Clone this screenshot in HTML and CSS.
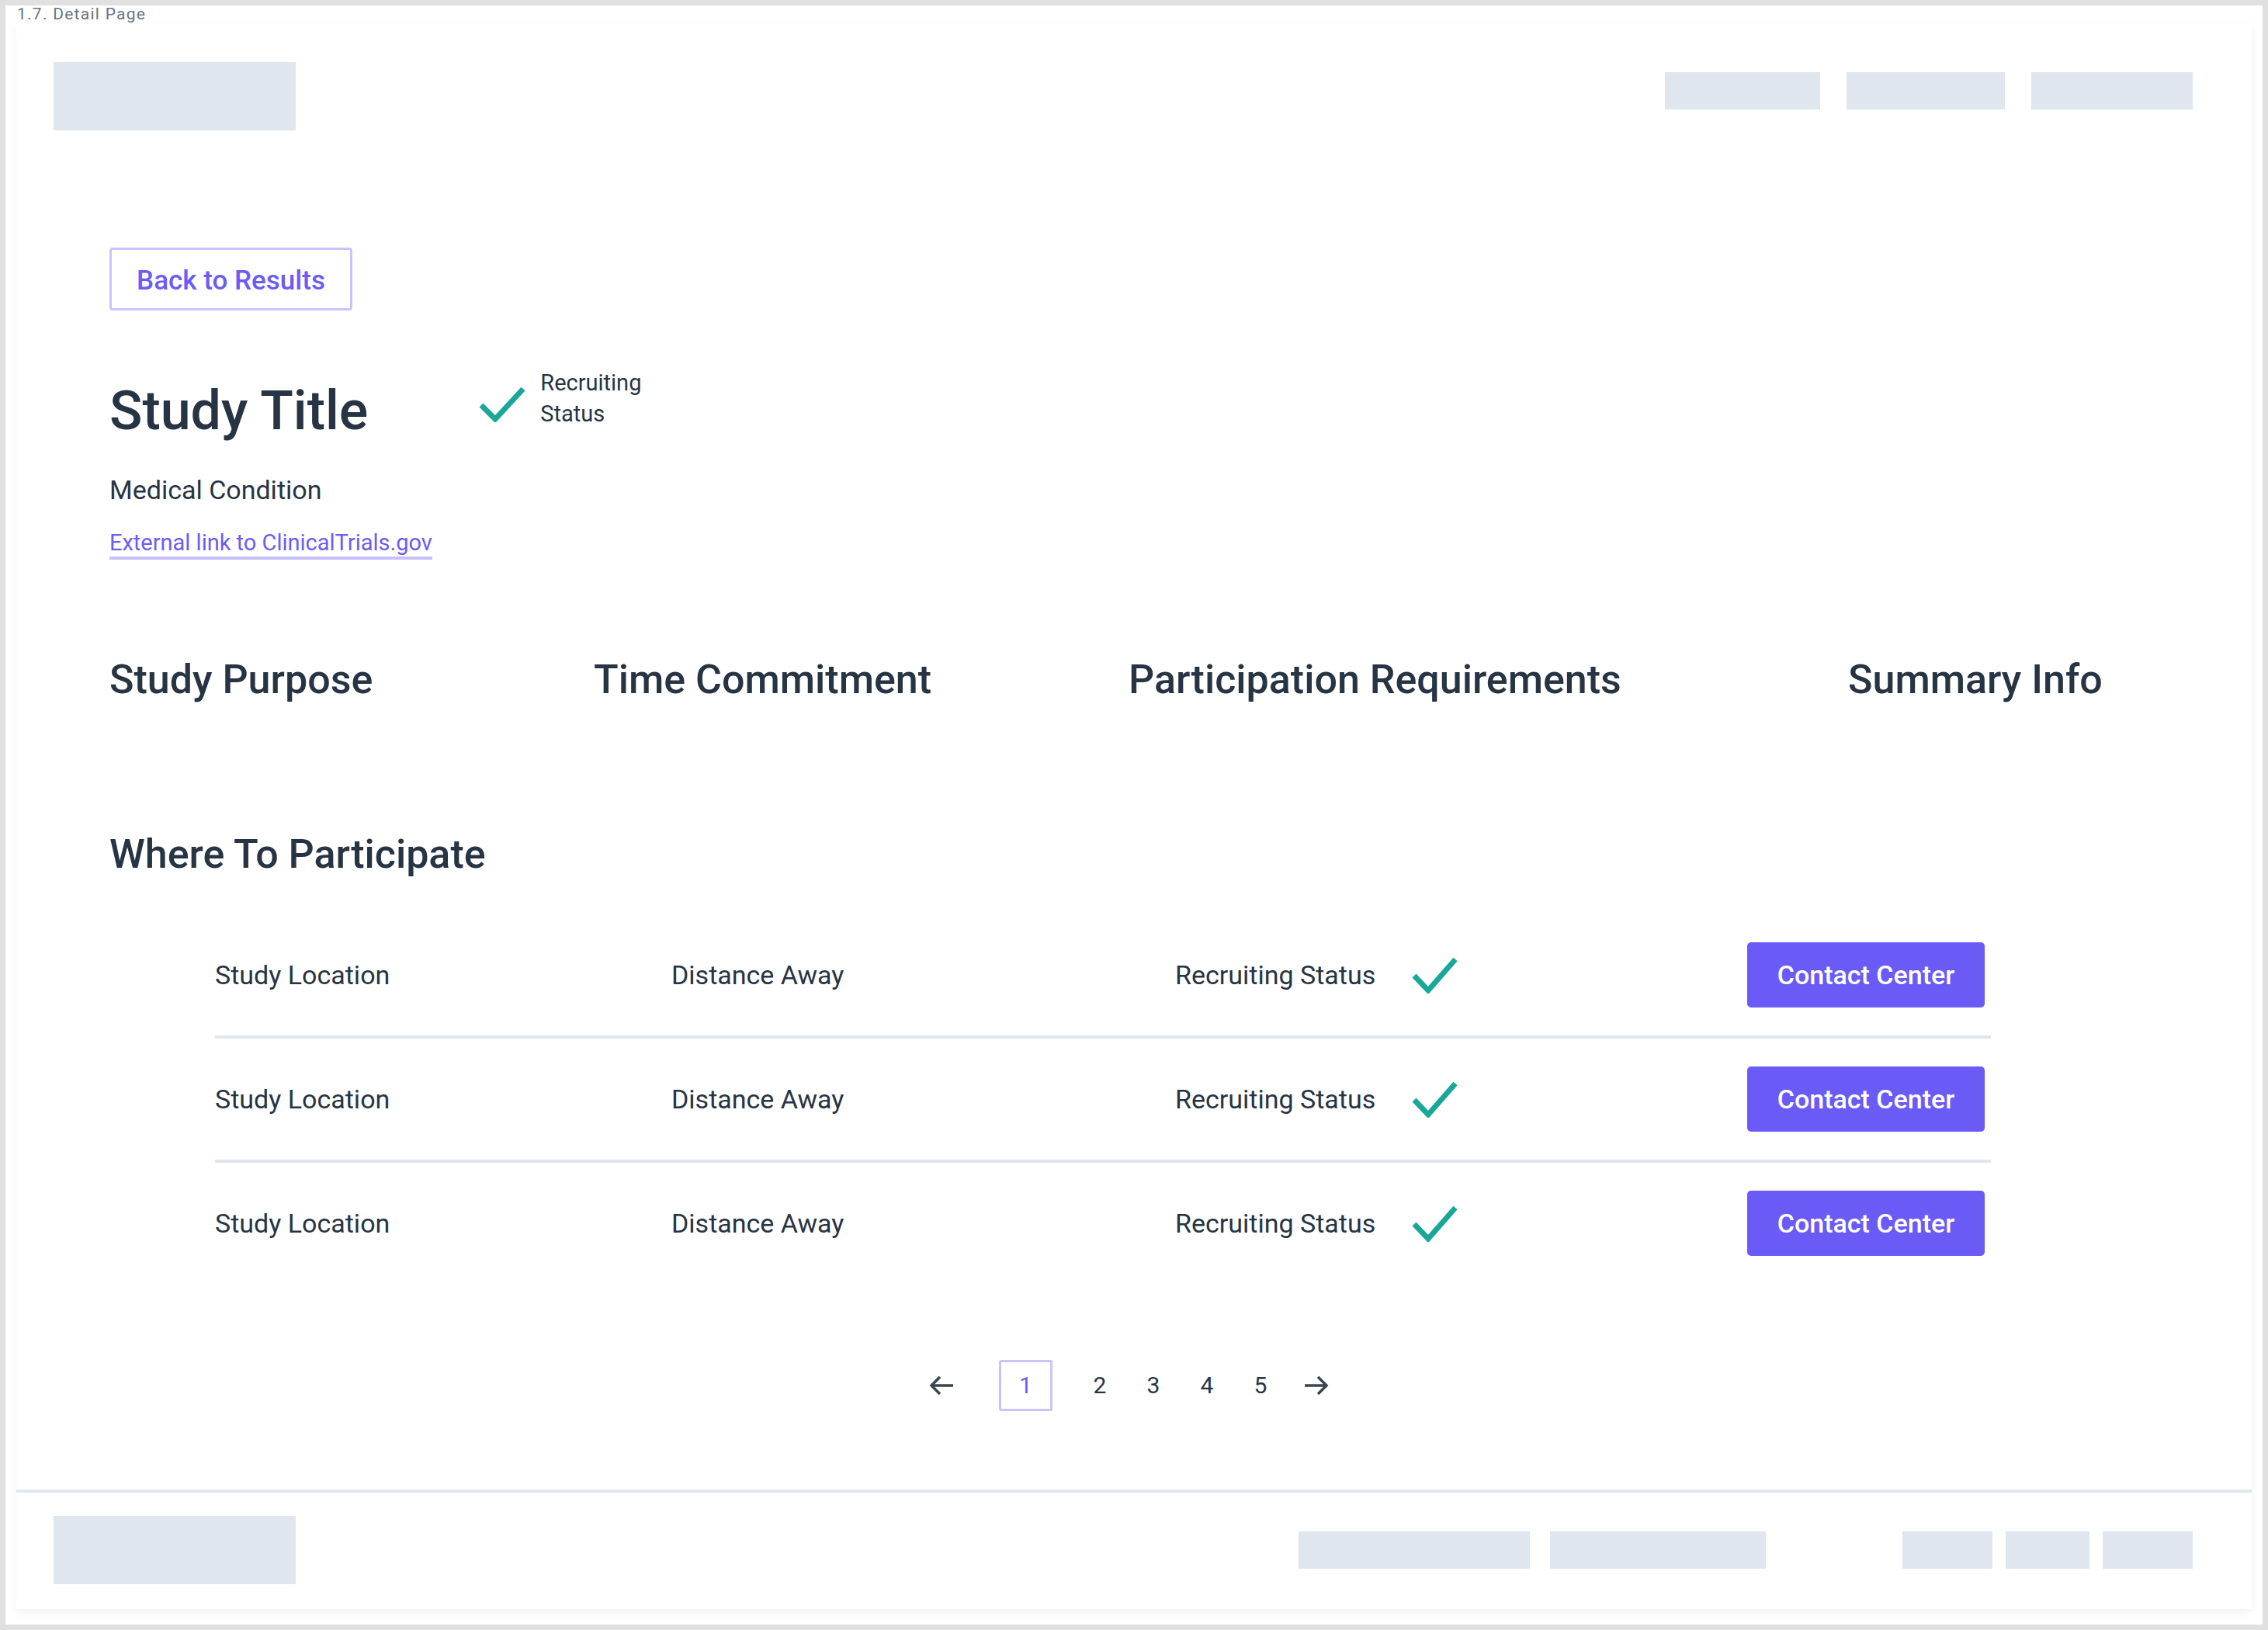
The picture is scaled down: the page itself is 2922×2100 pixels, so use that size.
FILE: index.html
```html
<!DOCTYPE html>
<html lang="en">
<head>
  <meta charset="UTF-8" />
  <meta name="viewport" content="width=device-width, initial-scale=1" />
  <title>1.7. Detail Page</title>
  <link rel="stylesheet" href="styles.css">
</head>
<body>
  <div class="canvas">
    <div class="frame-label">1.7. Detail Page</div>
    <div class="artboard">
      <header class="site-header">
        <div class="ph logo"></div>
        <nav class="top-nav">
          <span class="ph nav-a"></span>
          <span class="ph nav-b"></span>
          <span class="ph nav-c"></span>
        </nav>
      </header>

      <main class="detail">
        <a href="#" class="back-btn">Back to Results</a>

        <div class="title-row">
          <h1 class="study-title">Study Title</h1>
          <svg class="check check-title" width="61" height="46" viewBox="0 0 61 46">
            <path d="M3 24 L21 42 L57 3" fill="none" stroke="#19a898" stroke-width="7" />
          </svg>
          <div class="status-note">Recruiting<br>Status</div>
        </div>

        <p class="condition">Medical Condition</p>
        <div class="ext"><a href="#" class="ext-link">External link to ClinicalTrials.gov</a></div>

        <div class="tabs">
          <div class="tab">Study Purpose</div>
          <div class="tab">Time Commitment</div>
          <div class="tab">Participation Requirements</div>
          <div class="tab">Summary Info</div>
        </div>

        <h2 class="section-title">Where To Participate</h2>

        <div class="locations">
          <div class="loc-row">
            <div class="cell">Study Location</div>
            <div class="cell">Distance Away</div>
            <div class="cell status-cell">
              <span>Recruiting Status</span>
              <svg class="check" width="60" height="47" viewBox="0 0 60 47">
                <path d="M3 24 L21 43 L56 3" fill="none" stroke="#19a898" stroke-width="7" />
              </svg>
            </div>
            <a href="#" class="contact-btn">Contact Center</a>
          </div>
          <div class="loc-row">
            <div class="cell">Study Location</div>
            <div class="cell">Distance Away</div>
            <div class="cell status-cell">
              <span>Recruiting Status</span>
              <svg class="check" width="60" height="47" viewBox="0 0 60 47">
                <path d="M3 24 L21 43 L56 3" fill="none" stroke="#19a898" stroke-width="7" />
              </svg>
            </div>
            <a href="#" class="contact-btn">Contact Center</a>
          </div>
          <div class="loc-row">
            <div class="cell">Study Location</div>
            <div class="cell">Distance Away</div>
            <div class="cell status-cell">
              <span>Recruiting Status</span>
              <svg class="check" width="60" height="47" viewBox="0 0 60 47">
                <path d="M3 24 L21 43 L56 3" fill="none" stroke="#19a898" stroke-width="7" />
              </svg>
            </div>
            <a href="#" class="contact-btn">Contact Center</a>
          </div>
        </div>

        <nav class="pager">
          <svg class="arrow prev" width="32" height="26" viewBox="0 0 32 26">
            <path d="M31 13 H3 M14 2 L3 13 L14 24" fill="none" stroke="#3a4550" stroke-width="3.5" />
          </svg>
          <span class="page current">1</span>
          <span class="page">2</span>
          <span class="page">3</span>
          <span class="page">4</span>
          <span class="page">5</span>
          <svg class="arrow next" width="32" height="26" viewBox="0 0 32 26">
            <path d="M1 13 H29 M18 2 L29 13 L18 24" fill="none" stroke="#3a4550" stroke-width="3.5" />
          </svg>
        </nav>
      </main>

      <footer class="site-footer">
        <div class="ph logo"></div>
        <div class="foot-right">
          <div class="foot-nav">
            <span class="ph foot-a"></span>
            <span class="ph foot-b"></span>
          </div>
          <div class="foot-social">
            <span class="ph soc-a"></span>
            <span class="ph soc-b"></span>
            <span class="ph soc-c"></span>
          </div>
        </div>
      </footer>
    </div>
  </div>
</body>
</html>
```

FILE: styles.css
```css
body {
  margin: 0;
  padding: 7px;
  background: #e0e0e0;
  font-family: Roboto, 'Liberation Sans', sans-serif;
  color: #273443;
}
.canvas {
  background: #fff;
  width: 2908px;
  height: 2086px;
}
.frame-label {
  height: 23px;
  padding-left: 15px;
  font-size: 21px;
  line-height: 23px;
  letter-spacing: 0.06em;
  color: #6b7580;
}
.artboard {
  margin-left: 14px;
  width: 2880px;
  height: 2043px;
  background: #fff;
  box-shadow: 0 4px 12px rgba(0, 0, 0, 0.06);
  display: flex;
  flex-direction: column;
}
.ph {
  display: block;
  background: #dfe6ed;
}
.logo {
  width: 312px;
  height: 88px;
}

/* header */
.site-header {
  display: flex;
  justify-content: space-between;
  align-items: flex-start;
  padding: 50px 76px 0 48px;
}
.top-nav {
  display: flex;
  gap: 34px;
  margin-top: 13px;
}
.top-nav .ph { height: 48px; }
.nav-a { width: 200px; }
.nav-b { width: 204px; }
.nav-c { width: 208px; }

/* detail body */
.detail {
  flex: 1;
  padding-left: 120px;
}
.back-btn {
  display: inline-flex;
  align-items: center;
  justify-content: center;
  box-sizing: border-box;
  width: 313px;
  height: 81px;
  margin-top: 151px;
  padding-top: 3px;
  border: 3px solid #c9c4fb;
  border-radius: 4px;
  color: #6b5cf5;
  font-size: 35px;
  font-weight: 500;
  text-decoration: none;
}
.title-row {
  display: flex;
  align-items: flex-start;
  margin-top: 73px;
}
.study-title {
  margin: 14px 0 0 0;
  font-size: 70px;
  line-height: 84px;
  font-weight: 500;
}
.check-title {
  margin: 25px 0 0 143px;
}
.status-note {
  margin-left: 18px;
  font-size: 29px;
  line-height: 40px;
}
.condition {
  margin: 40px 0 0 0;
  font-size: 34px;
  line-height: 40px;
}
.ext {
  margin-top: 31px;
}
.ext-link {
  display: inline-block;
  font-size: 29px;
  line-height: 35px;
  color: #6b5cf5;
  text-decoration: none;
  border-bottom: 4px solid #c6c1fb;
}
.tabs {
  display: grid;
  grid-template-columns: 624px 689px 927px auto;
  margin-top: 125px;
}
.tab {
  font-size: 52px;
  line-height: 60px;
  font-weight: 500;
}
.section-title {
  margin: 165px 0 0 0;
  font-size: 52px;
  line-height: 60px;
  font-weight: 500;
}

/* locations table */
.locations {
  margin: 47px 0 0 136px;
  width: 2288px;
}
.loc-row {
  display: grid;
  grid-template-columns: 588px 649px 737px 306px;
  align-items: center;
  height: 156px;
  border-bottom: 4px solid #dfe6ed;
}
.loc-row:last-child {
  border-bottom: 0;
}
.cell {
  font-size: 34px;
  line-height: 40px;
}
.status-cell {
  display: grid;
  grid-template-columns: 305px 60px;
  align-items: center;
}
.contact-btn {
  display: flex;
  align-items: center;
  justify-content: center;
  height: 84px;
  border-radius: 5px;
  background: #6a5af6;
  color: #fff;
  font-size: 34px;
  font-weight: 500;
  text-decoration: none;
}

/* pager */
.pager {
  display: flex;
  align-items: center;
  gap: 33px;
  margin: 98px 0 101px 0;
  padding-left: 1056px;
  height: 66px;
}
.arrow.prev { margin-right: 25px; }
.arrow.next { margin-left: 5px; }
.page {
  width: 36px;
  text-align: center;
  font-size: 30px;
  line-height: 36px;
}
.page.current {
  box-sizing: border-box;
  width: 69px;
  height: 66px;
  line-height: 60px;
  border: 3px solid #c9c4fb;
  border-radius: 3px;
  color: #6b5cf5;
  margin-right: 10px;
}

/* footer */
.site-footer {
  display: flex;
  justify-content: space-between;
  align-items: center;
  border-top: 4px solid #dfe6ed;
  padding: 30px 76px 32px 48px;
}
.foot-right {
  display: flex;
  align-items: center;
}
.foot-nav {
  display: flex;
  gap: 26px;
}
.foot-social {
  display: flex;
  gap: 17px;
  margin-left: 176px;
}
.foot-right .ph { height: 48px; }
.foot-a { width: 298px; }
.foot-b { width: 278px; }
.soc-a { width: 116px; }
.soc-b { width: 108px; }
.soc-c { width: 116px; }
```
